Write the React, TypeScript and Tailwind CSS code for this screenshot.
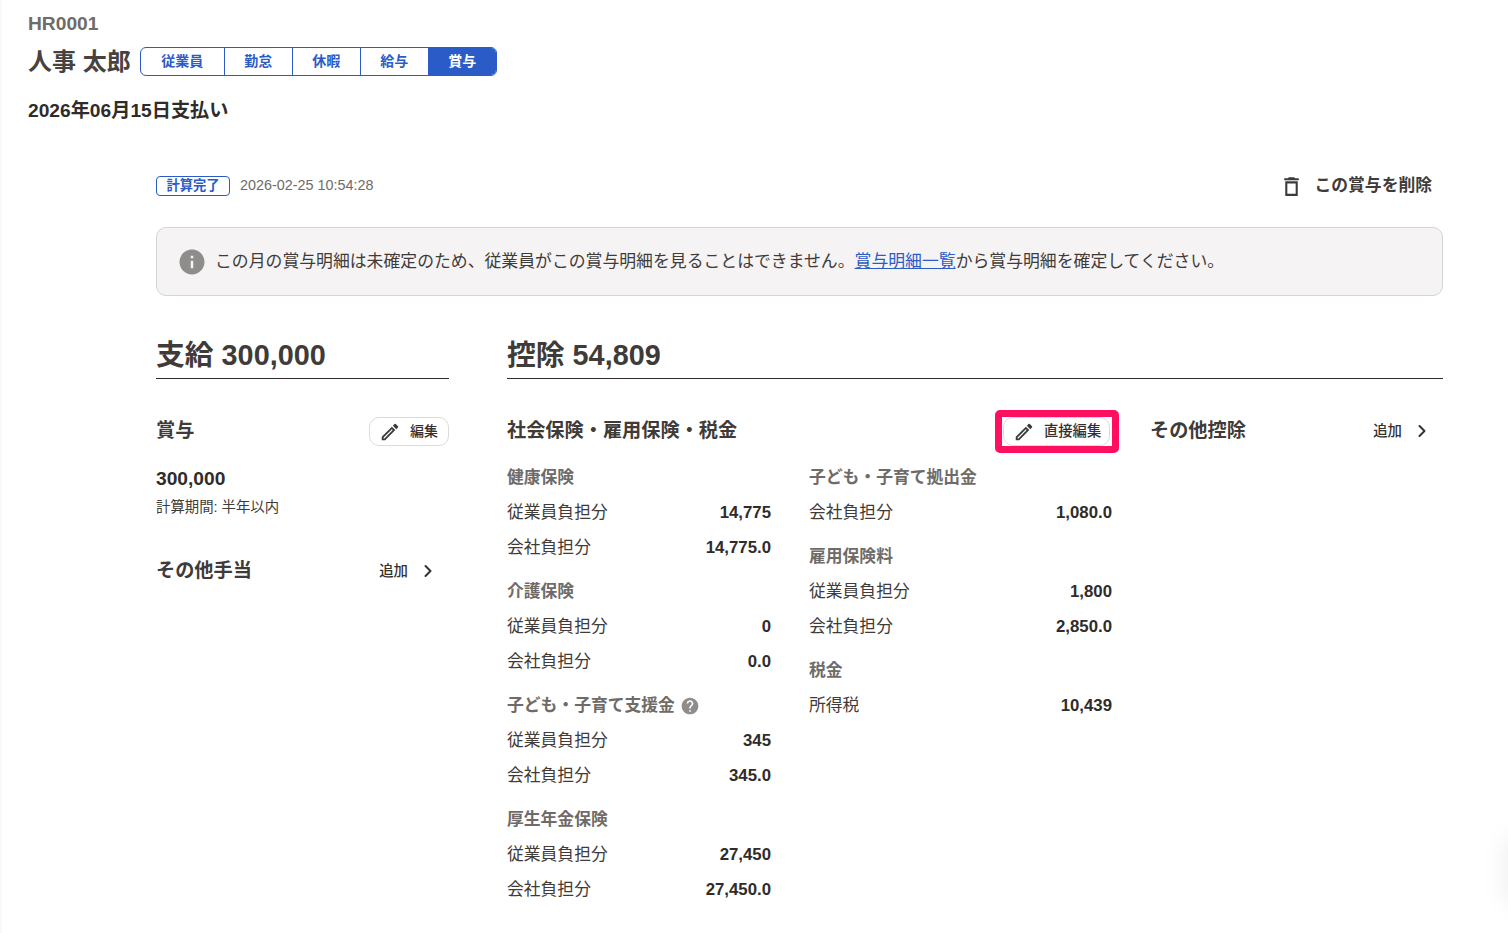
import { ChevronRight } from 'lucide-react';

const font = 'font-["Liberation_Sans","Noto_Sans_CJK_JP",sans-serif]';

const tabs = ['従業員', '勤怠', '休暇', '給与', '賞与'];

interface Row {
  label: string;
  value: string;
}

interface Group {
  title: string;
  help?: boolean;
  rows: Row[];
}

const leftGroups: Group[] = [
  {
    title: '健康保険',
    rows: [
      { label: '従業員負担分', value: '14,775' },
      { label: '会社負担分', value: '14,775.0' },
    ],
  },
  {
    title: '介護保険',
    rows: [
      { label: '従業員負担分', value: '0' },
      { label: '会社負担分', value: '0.0' },
    ],
  },
  {
    title: '子ども・子育て支援金',
    help: true,
    rows: [
      { label: '従業員負担分', value: '345' },
      { label: '会社負担分', value: '345.0' },
    ],
  },
  {
    title: '厚生年金保険',
    rows: [
      { label: '従業員負担分', value: '27,450' },
      { label: '会社負担分', value: '27,450.0' },
    ],
  },
];

const rightGroups: Group[] = [
  {
    title: '子ども・子育て拠出金',
    rows: [{ label: '会社負担分', value: '1,080.0' }],
  },
  {
    title: '雇用保険料',
    rows: [
      { label: '従業員負担分', value: '1,800' },
      { label: '会社負担分', value: '2,850.0' },
    ],
  },
  {
    title: '税金',
    rows: [{ label: '所得税', value: '10,439' }],
  },
];

function TrashIcon() {
  return (
    <svg width="25" height="25" viewBox="0 0 24 24" fill="currentColor" className="text-[#3b3b3b]">
      <path d="M6 21h12V7H6v14zM8 9h8v10H8V9zm7.5-5l-1-1h-5l-1 1H5v2h14V4z" />
    </svg>
  );
}

function PencilIcon() {
  return (
    <svg width="22" height="22" viewBox="0 0 24 24" fill="currentColor" className="shrink-0 text-[#3b3b3b]">
      <path d="M3 17.25V21h3.75L17.81 9.94l-3.75-3.75L3 17.25zM5.92 19H5v-.92l9.06-9.06.92.92L5.92 19zM20.71 7.04c.39-.39.39-1.02 0-1.41l-2.34-2.34a1 1 0 0 0-1.41 0l-1.83 1.83 3.75 3.75 1.83-1.83z" />
    </svg>
  );
}

function InfoIcon() {
  return (
    <svg width="30" height="30" viewBox="0 0 24 24" fill="currentColor" className="shrink-0 text-[#8f8d8b]">
      <path d="M12 2C6.48 2 2 6.48 2 12s4.48 10 10 10 10-4.48 10-10S17.52 2 12 2zm1 15h-2v-6h2v6zm0-8h-2V7h2v2z" />
    </svg>
  );
}

function HelpIcon() {
  return (
    <svg width="20" height="20" viewBox="0 0 24 24" fill="currentColor" className="ml-[5px] shrink-0 text-[#8f8d8b]">
      <path d="M12 2C6.48 2 2 6.48 2 12s4.48 10 10 10 10-4.48 10-10S17.52 2 12 2zm1 17h-2v-2h2v2zm2.07-7.75l-.9.92C13.45 12.9 13 13.5 13 15h-2v-.5c0-1.1.45-2.1 1.17-2.83l1.24-1.26c.37-.36.59-.86.59-1.41 0-1.1-.9-2-2-2s-2 .9-2 2H8c0-2.21 1.79-4 4-4s4 1.79 4 4c0 .88-.36 1.68-.93 2.25z" />
    </svg>
  );
}

function InsuranceGroup({ group }: { group: Group }) {
  return (
    <div className="mb-[9px]">
      <div className="flex h-[35px] items-center text-[16.8px] font-bold text-[#6e6b68]">
        {group.title}
        {group.help ? <HelpIcon /> : null}
      </div>
      {group.rows.map((row) => (
        <div key={row.label} className="flex h-[35px] items-center justify-between text-[16.8px]">
          <span className="text-[#3f3b38]">{row.label}</span>
          <span className="font-bold text-[#2f2c2a]">{row.value}</span>
        </div>
      ))}
    </div>
  );
}

function AddLink() {
  return (
    <div className="flex items-center text-[14.4px] font-medium text-[#34312f]">
      追加
      <ChevronRight size={20} strokeWidth={2.4} className="ml-[10px] mr-[11px]" />
    </div>
  );
}

export default function App() {
  return (
    <div
      className={`${font} relative min-h-[933px] overflow-hidden bg-white pl-[28px] pt-[12px] text-[#2f2c2a] shadow-[inset_3px_0_3px_-2px_rgba(0,0,0,0.05)]`}
    >
      <div className="absolute top-[835px] right-[-24px] h-[70px] w-[30px] rounded-full bg-black/5 blur-[10px]" />

      <p className="text-[19.2px] leading-[24px] font-bold text-[#6e6b68]">HR0001</p>

      <div className="mt-[11px] flex items-center">
        <h1 className="text-[24px] leading-[29px] font-bold text-[#46423f]">人事 太郎</h1>
        <div className="ml-[9px] flex h-[29px] w-[357px] overflow-hidden rounded-[6px] border border-[#2a5bc7] text-[14px] font-bold">
          {tabs.map((tab, i) => (
            <div
              key={tab}
              className={
                i === 4
                  ? 'flex flex-1 items-center justify-center bg-[#2a5bc7] text-white'
                  : i === 0
                    ? 'flex w-[84px] items-center justify-center border-r border-[#2a5bc7] text-[#2a5bc7]'
                    : 'flex w-[68px] items-center justify-center border-r border-[#2a5bc7] text-[#2a5bc7]'
              }
            >
              {tab}
            </div>
          ))}
        </div>
      </div>

      <p className="mt-[22px] text-[19.2px] leading-[26px] font-bold">2026年06月15日支払い</p>

      <div className="mt-[40px] ml-[128px] mr-[65px]">
        <div className="flex h-[44px] items-center justify-between">
          <div className="flex items-center">
            <span className="flex h-[20px] w-[74px] items-center justify-center rounded-[4px] border border-[#2a5bc7] text-[13.3px] font-bold text-[#2a5bc7]">
              計算完了
            </span>
            <span className="ml-[10px] text-[14.4px] text-[#6e6b68]">2026-02-25 10:54:28</span>
          </div>
          <div className="mr-[11px] flex items-center text-[16.8px] font-bold text-[#3f3b38]">
            <TrashIcon />
            <span className="ml-[11px]">この賞与を削除</span>
          </div>
        </div>

        <div className="mt-[19px] flex h-[69px] items-center rounded-[10px] border border-[#d6d4d2] bg-[#f5f3f4] pl-[20px] text-[16.85px] text-[#3f3b38]">
          <InfoIcon />
          <span className="ml-[8px]">
            この月の賞与明細は未確定のため、従業員がこの賞与明細を見ることはできません。
            <span className="text-[#2a5bc7] underline">賞与明細一覧</span>
            から賞与明細を確定してください。
          </span>
        </div>

        <div className="mt-[34px] flex">
          <div className="w-[293px]">
            <h2 className="h-[49px] border-b border-[#2f2c2a] text-[28.8px] leading-[50px] font-bold text-[#3f3b38]">
              支給 300,000
            </h2>

            <div className="mt-[38px] flex items-center justify-between">
              <h3 className="text-[19.2px] font-bold text-[#3f3b38]">賞与</h3>
              <button className="flex h-[29px] w-[80px] items-center rounded-[10px] border border-[#dddbd9] pl-[9px] text-[14px] font-medium text-[#34312f]">
                <PencilIcon />
                <span className="ml-[9px]">編集</span>
              </button>
            </div>

            <p className="mt-[20px] text-[19.2px] leading-[26px] font-bold">300,000</p>
            <p className="mt-[6px] text-[14.4px] leading-[18px] text-[#3f3b38]">計算期間: 半年以内</p>

            <div className="mt-[41px] flex items-center justify-between">
              <h3 className="text-[19.2px] font-bold text-[#3f3b38]">その他手当</h3>
              <AddLink />
            </div>
          </div>

          <div className="ml-[58px] flex-1">
            <h2 className="h-[49px] border-b border-[#2f2c2a] text-[28.8px] leading-[50px] font-bold text-[#3f3b38]">
              控除 54,809
            </h2>

            <div className="mt-[38px] flex">
              <div className="w-[605px]">
                <div className="flex h-[29px] items-center justify-between">
                  <h3 className="text-[19.2px] font-bold text-[#3f3b38]">社会保険・雇用保険・税金</h3>
                  <div className="mr-[-7px] w-[124px] rounded-[5px] border-[7px] border-[#ff0f60] pl-[1px]">
                    <button className="flex h-[29px] w-[107px] items-center rounded-[10px] border border-[#dddbd9] pl-[9px] text-[14.3px] font-medium text-[#34312f]">
                      <PencilIcon />
                      <span className="ml-[9px]">直接編集</span>
                    </button>
                  </div>
                </div>

                <div className="mt-[14px] flex">
                  <div className="w-[264px]">
                    {leftGroups.map((group) => (
                      <InsuranceGroup key={group.title} group={group} />
                    ))}
                  </div>
                  <div className="ml-[38px] w-[303px]">
                    {rightGroups.map((group) => (
                      <InsuranceGroup key={group.title} group={group} />
                    ))}
                  </div>
                </div>
              </div>

              <div className="ml-[38px] flex h-[29px] flex-1 items-center justify-between">
                <h3 className="text-[19.2px] font-bold text-[#3f3b38]">その他控除</h3>
                <AddLink />
              </div>
            </div>
          </div>
        </div>
      </div>
    </div>
  );
}
